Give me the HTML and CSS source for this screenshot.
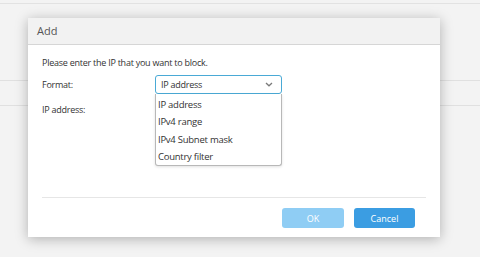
FILE: index.html
```html
<!DOCTYPE html>
<html lang="en">
<head>
    <meta charset="UTF-8">
    <title>Add</title>
    <link rel="stylesheet" href="styles.css">
</head>
<body>
    <div class="page">
        <div class="page-top"></div>
        <div class="page-row first"></div>
        <div class="page-row"></div>
    </div>

    <div class="dialog">
        <div class="dialog-head">Add</div>
        <div class="dialog-body">
            <p class="intro">Please enter the IP that you want to block.</p>
            <div class="field">
                <label>Format:</label>
                <div class="select-wrap">
                    <div class="select">
                        <span>IP address</span>
                        <svg width="8" height="5" viewBox="0 0 8 5"><path d="M1 1l3 2.8L7 1" fill="none" stroke="#7a7a7a" stroke-width="1.3"/></svg>
                    </div>
                    <ul class="options">
                        <li>IP address</li>
                        <li>IPv4 range</li>
                        <li>IPv4 Subnet mask</li>
                        <li>Country filter</li>
                    </ul>
                </div>
            </div>
            <div class="field">
                <label>IP address:</label>
            </div>
        </div>
        <div class="dialog-foot">
            <button class="btn btn-ok">OK</button>
            <button class="btn btn-cancel">Cancel</button>
        </div>
    </div>
</body>
</html>
```

FILE: styles.css
```css
* {
    margin: 0;
    padding: 0;
    box-sizing: border-box;
}

body {
    font-family: 'Open Sans', 'Noto Sans', sans-serif;
    font-size: 9px;
    letter-spacing: -0.25px;
    color: #333;
    background: #f3f3f3;
    width: 480px;
    height: 257px;
    overflow: hidden;
}

.page-top {
    height: 4px;
    border-bottom: 1px solid #e2e2e2;
}

.page-row {
    height: 25px;
    border-bottom: 1px solid #e0e0e0;
}

.page-row.first {
    margin-top: 52px;
}

.dialog {
    position: absolute;
    top: 18px;
    left: 28px;
    width: 412px;
    height: 219px;
    background: #fff;
    box-shadow: 0 2px 12px rgba(0, 0, 0, 0.28);
    display: flex;
    flex-direction: column;
}

.dialog-head {
    height: 27px;
    line-height: 26px;
    padding-left: 9px;
    font-size: 11px;
    letter-spacing: 0;
    color: #555;
    background: #f2f2f2;
    border-bottom: 1px solid #d6d6d6;
}

.dialog-body {
    flex: 1;
    padding: 11px 14px 0;
}

.intro {
    line-height: 14px;
}

.field {
    display: flex;
    align-items: center;
    height: 19px;
    margin-top: 5px;
}

.field + .field {
    margin-top: 6px;
}

.field label {
    width: 113px;
}

.select-wrap {
    position: relative;
    width: 127px;
}

.select {
    height: 19px;
    border: 1px solid #4aaad6;
    border-radius: 3px;
    display: flex;
    align-items: center;
    justify-content: space-between;
    padding: 0 8px 0 5px;
}

.options {
    position: absolute;
    top: 19px;
    left: 0;
    width: 127px;
    list-style: none;
    background: #fff;
    border: 1px solid #b8b8b8;
    border-top: none;
    border-radius: 0 0 3px 3px;
    box-shadow: 0 1px 3px rgba(0, 0, 0, 0.12);
    padding-top: 2px;
    z-index: 2;
}

.options li {
    height: 17.3px;
    line-height: 17px;
    padding-left: 2px;
    font-size: 9.5px;
}

.dialog-foot {
    margin: 0 14px;
    border-top: 1px solid #e6e6e6;
    padding: 10px 11px 9px 0;
    display: flex;
    justify-content: flex-end;
    gap: 10px;
}

.btn {
    height: 20px;
    border: none;
    border-radius: 3px;
    color: #fff;
    font-family: inherit;
    font-size: 9px;
}

.btn-ok {
    width: 62px;
    background: #8fcdf4;
}

.btn-cancel {
    width: 61px;
    background: #3b9de2;
}
```
